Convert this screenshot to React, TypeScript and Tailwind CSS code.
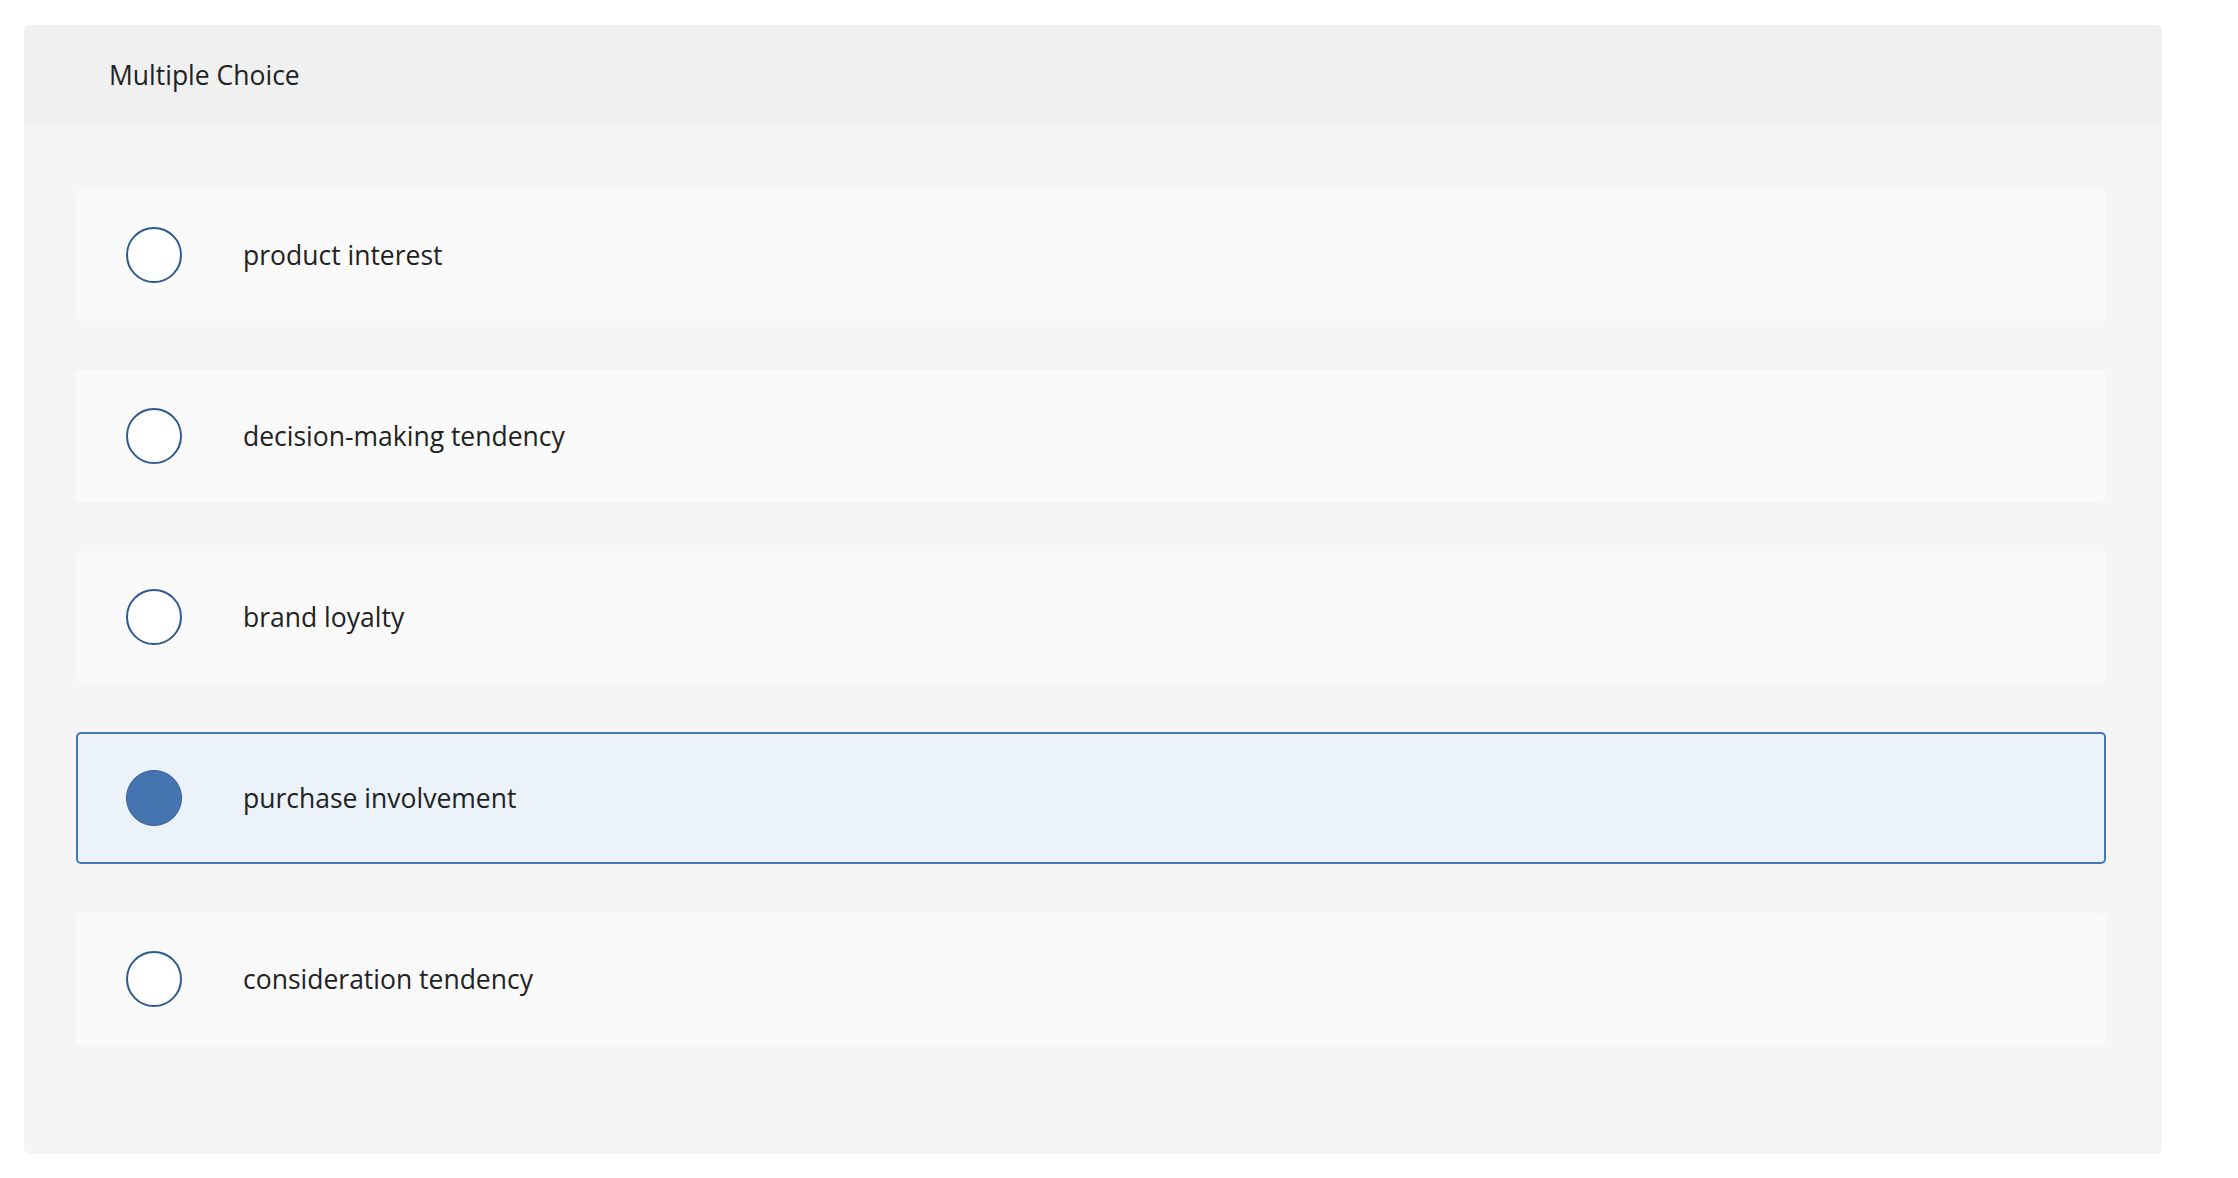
const OPTIONS = [
  "product interest",
  "decision-making tendency",
  "brand loyalty",
  "purchase involvement",
  "consideration tendency",
];

const SELECTED = 3;

function Radio({ checked }: { checked: boolean }) {
  return (
    <span
      className={
        checked
          ? "block w-[56px] h-[56px] rounded-full border-[1.5px] border-[#2f5b8f] bg-[#4574b1] shrink-0"
          : "block w-[56px] h-[56px] rounded-full border-[2px] border-[#2e5a8e] bg-white shrink-0"
      }
    />
  );
}

export default function App() {
  return (
    <div className="min-h-screen bg-white pt-[25px] pl-[24px] pr-[76px] font-['Open_Sans',sans-serif] text-[#222]">
      <div className="bg-[#f5f5f5] rounded-[6px] overflow-hidden h-[1129px]">
        <div className="bg-[#f0f0f0] h-[100px] flex items-center pl-[85px]">
          <h2 className="text-[26.5px] leading-none">Multiple Choice</h2>
        </div>
        <div className="pt-[64px] pl-[52px] pr-[56px] flex flex-col gap-[49px]">
          {OPTIONS.map((label, i) => {
            const checked = i === SELECTED;
            return (
              <label
                key={label}
                className={
                  checked
                    ? "flex items-center h-[132px] rounded-[5px] border-[2px] border-[#4676b6] bg-[#ebf2fa] pl-[48px]"
                    : "flex items-center h-[132px] rounded-[5px] border-[2px] border-transparent bg-[#fafafa] pl-[48px]"
                }
              >
                <Radio checked={checked} />
                <span className="ml-[61px] text-[26.5px] leading-none">{label}</span>
              </label>
            );
          })}
        </div>
      </div>
    </div>
  );
}
